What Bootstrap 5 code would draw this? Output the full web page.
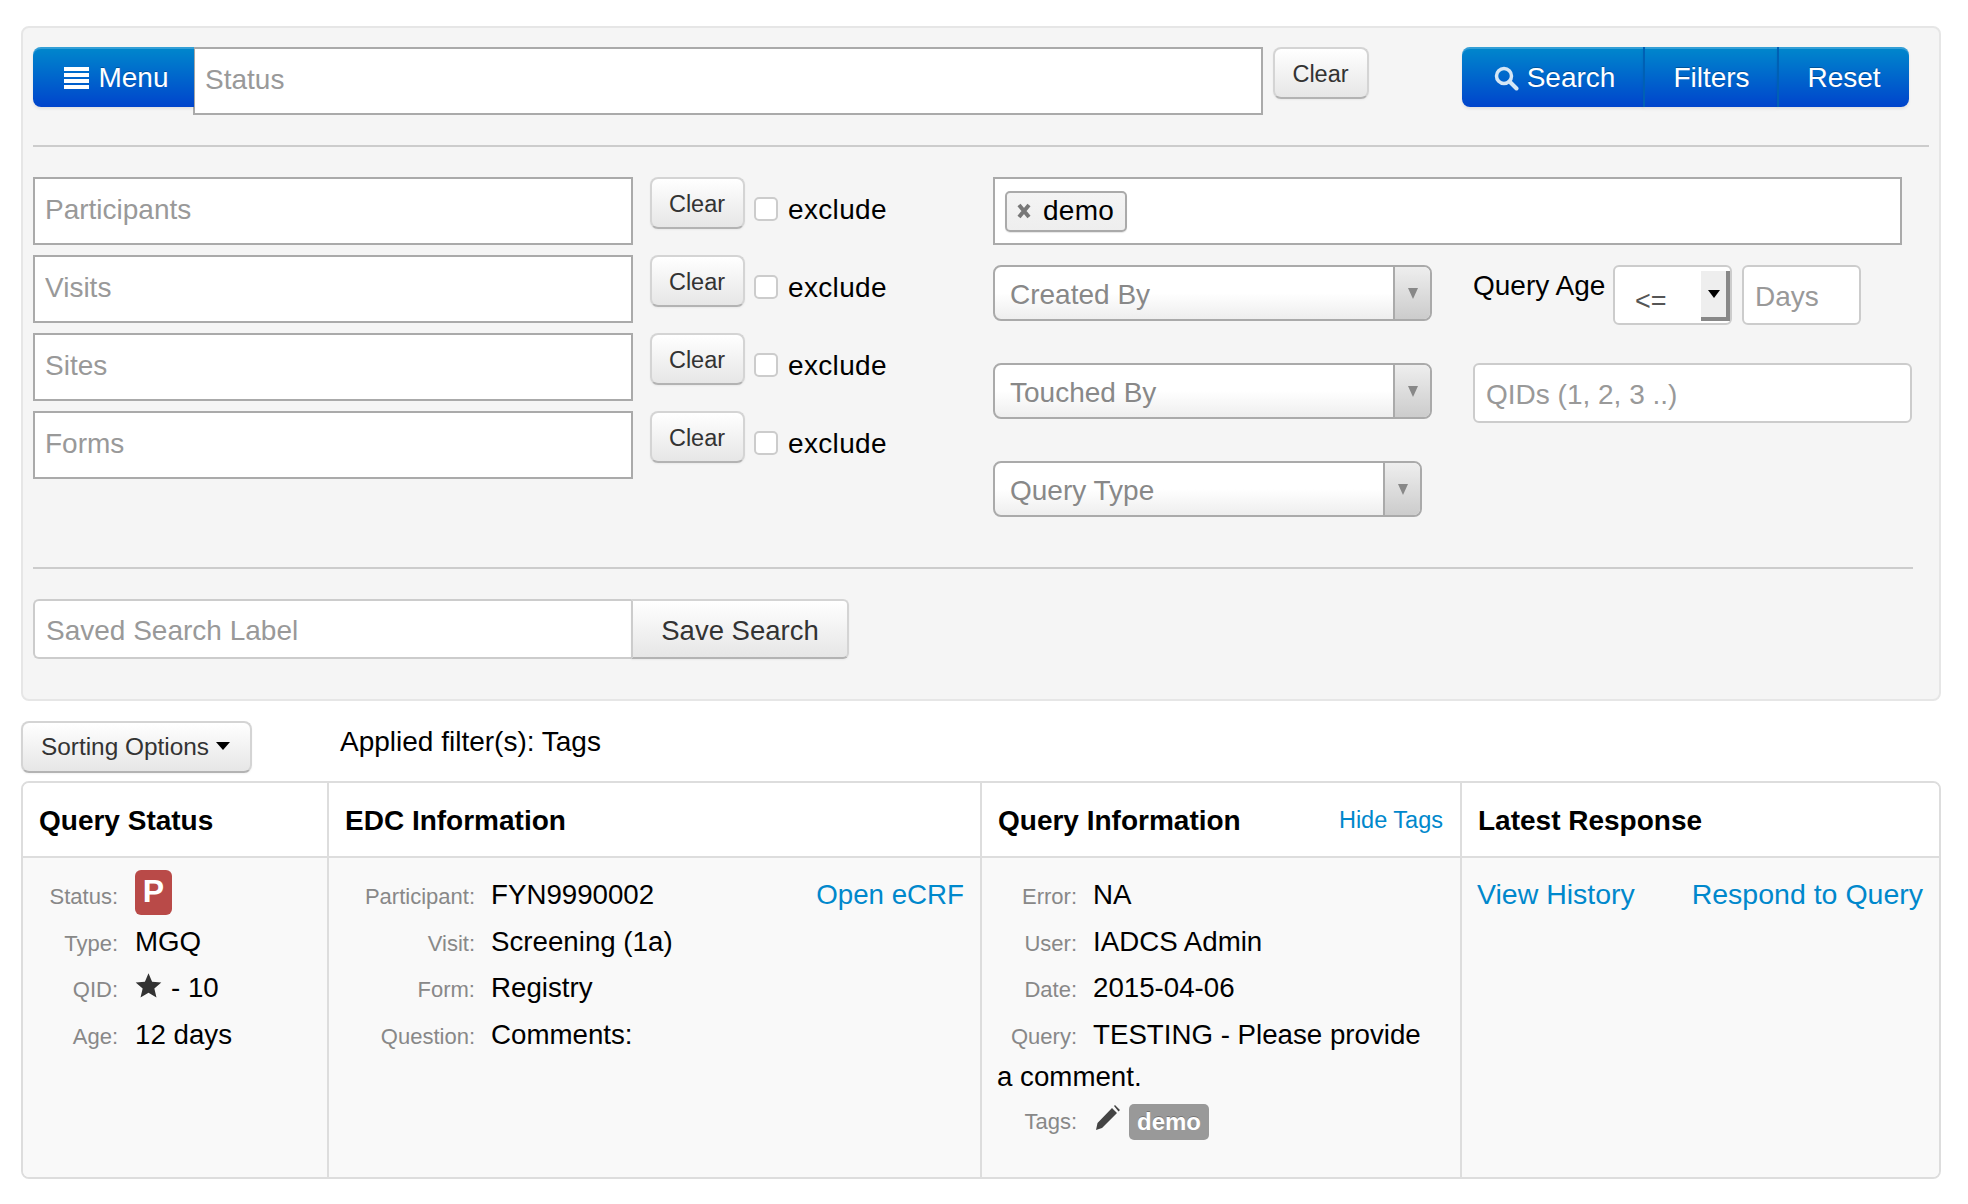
<!DOCTYPE html>
<html lang="en">
<head>
    <meta charset="UTF-8">
    <meta name="viewport" content="width=device-width, initial-scale=1.0">
    <title>Query Search</title>
    <link href="https://cdn.jsdelivr.net/npm/bootstrap@5.3.0/dist/css/bootstrap.min.css" rel="stylesheet">
    <style>
        body { font-family: "Liberation Sans", Arial, sans-serif; font-size: 28px; color: #000; background: #fff; }
        .page-wrap { padding: 26px 27px 24px 21px; }

        .search-well { background: #f5f5f5; border: 2px solid #e6e6e6; border-radius: 8px; padding: 19px 10px 39px 10px; height: 675px; }
        .rule-one, .rule-two { border: 0; border-top: 2px solid #ccc; opacity: 1; }
        .rule-one { margin: 30px 0 30px 0; width: 1896px; }
        .rule-two { margin: 50px 0 30px 0; width: 1880px; }

        .field-sharp.form-control { width: 600px; height: 68px; border: 2px solid #aaa; border-radius: 0; font-size: 28px; padding: 0 10px 2px; color: #000; background: #fff; box-shadow: none; }
        .field-sharp.form-control::placeholder,
        .field-soft.form-control::placeholder { color: #999; opacity: 1; }
        .status-field.form-control { flex: 0 0 1070px; width: 1070px; padding: 0 10px 2px; }
        .field-soft.form-control { height: 60px; border: 2px solid #ccc; border-radius: 6px; font-size: 28px; padding: 4px 11px 0; background: #fff; box-shadow: none; }

        .blue-btn.btn { background: linear-gradient(#0088cc, #0044cc); color: #fff; border: 0; border-radius: 8px; font-size: 28px; height: 60px; padding: 2px 0 0; box-shadow: inset 0 2px 0 rgba(255,255,255,.2), 0 2px 3px rgba(0,0,0,.08); display: flex; align-items: center; justify-content: center; text-shadow: 0 -1px 0 rgba(0,0,0,.25); }
        .menu-btn.btn { width: 161px; gap: 9px; padding-left: 6px; border-radius: 8px 0 0 8px; }
        .action-group { width: 449px; height: 60px; margin-left: auto; margin-right: 18px; }
        .action-group .blue-btn.btn { flex: 0 0 auto; }
        .action-group .search-btn { width: 182px; gap: 8px; padding-left: 3px; }
        .action-group .filters-btn { width: 135px; border-left: 2px solid #0060b4; }
        .action-group .reset-btn { width: 132px; border-left: 2px solid #0060b4; }

        .grey-btn.btn { background: linear-gradient(#fff, #e6e6e6); border: 2px solid #d4d4d4; border-bottom-color: #b3b3b3; border-radius: 8px; color: #333; padding: 0; box-shadow: inset 0 1px 0 rgba(255,255,255,.2), 0 1px 2px rgba(0,0,0,.05); }
        .clear-btn.btn { width: 95px; height: 52px; font-size: 23.5px; padding: 3px 1px 0 0; }
        .top-clear.btn { margin-left: 10px; width: 96px; padding-top: 3px; }

        .filter-left { width: 960px; flex: 0 0 960px; }
        .filter-line { height: 68px; margin-bottom: 10px; }
        .filter-line .clear-btn { margin-left: 17px; }
        .exclude-box.form-check-input { width: 24px; height: 24px; margin: 20px 0 0 9px; border: 2px solid #ccc; border-radius: 5px; background-color: #fff; }
        .exclude-text { margin-left: 10px; line-height: 66px; letter-spacing: .35px; }

        .tag-field { width: 909px; height: 68px; border: 2px solid #aaa; background: #fff; padding: 10px; margin-bottom: 20px; }
        .tag-chip { display: inline-flex; align-items: center; height: 41px; width: 122px; border: 2px solid #aaa; border-radius: 5px; background: linear-gradient(#f4f4f4, #eee); padding-left: 10px; gap: 12px; letter-spacing: .3px; box-shadow: 0 1px 1px rgba(0,0,0,.1); }
        .pick-line { height: 98px; }
        .pick-box { width: 439px; height: 56px; border: 2px solid #aaa; border-radius: 8px; background: linear-gradient(#fff 50%, #eee); color: #888; padding-left: 15px; line-height: 55px; overflow: hidden; flex: 0 0 auto; }
        .pick-box.pick-short { width: 429px; }
        .pick-text { flex: 1 1 auto; }
        .pick-arrow { width: 37px; height: 100%; border-left: 2px solid #aaa; background: linear-gradient(#eee, #ccc); }
        .pick-arrow i { border-style: solid; border-width: 11px 5px 0; border-color: #888 transparent transparent; }
        .age-label { width: 140px; margin-left: 41px; line-height: 42px; }
        .age-select { position: relative; width: 119px; height: 60px; border: 2px solid #ccc; border-radius: 6px; background: #fff; color: #555; font-size: 27px; padding: 14px 0 0 20px; }
        .age-arrow { position: absolute; top: 4px; right: 0; width: 29px; height: 50px; background: #eee; border-right: 4px solid #888; border-bottom: 4px solid #888; }
        .age-arrow i { border-style: solid; border-width: 8px 6px 0; border-color: #000 transparent transparent; }
        .days-field.form-control { width: 119px; margin-left: 10px; flex: 0 0 auto; }
        .qid-field.form-control { width: 439px; margin-left: 41px; flex: 0 0 auto; }

        .save-group { width: 816px; }
        .save-field.form-control { flex: 0 0 598px; width: 598px; height: 60px; border-right: 0; border-radius: 6px 0 0 6px; padding: 3px 11px 0; color: #000; }
        .save-btn.btn { width: 218px; height: 60px; font-size: 27.5px; padding-top: 3px; border-radius: 0 6px 6px 0 !important; border-left: 2px solid #ccc; margin-left: 0 !important; }

        .tools-line { margin-top: 20px; height: 60px; }
        .sort-btn.btn { width: 231px; height: 52px; font-size: 24.4px; padding-right: 2px; }
        .sort-btn.dropdown-toggle::after { vertical-align: 5px; margin-left: 7px; border-top: 8px solid #000; border-right: 7px solid transparent; border-left: 7px solid transparent; border-bottom: 0; }
        .applied-text { margin-left: 88px; line-height: 42px; }

        .result-frame { border: 2px solid #ddd; border-radius: 8px; overflow: hidden; height: 398px; }
        .result-table.table { table-layout: fixed; width: 1916px; height: 100%; margin: 0; border-collapse: collapse; }
        .result-table.table > thead > tr > th { height: 74px; padding: 2px 17px 0 16px; font-size: 28px; font-weight: 700; vertical-align: middle; border-bottom: 2px solid #ddd; border-left: 2px solid #ddd; background: #fff; color: #000; box-shadow: none; }
        .result-table.table > tbody > tr > td { padding: 15px 16px 0 15px; font-size: 27.7px; vertical-align: top; border: 0; border-left: 2px solid #ddd; background: #f9f9f9; color: #000; box-shadow: none; }
        .result-table.table > thead > tr > th:first-child,
        .result-table.table > tbody > tr > td:first-child { border-left: 0; padding-left: 16px; }
        .col-status { width: 305px; }
        .col-edc { width: 653px; }
        .col-query { width: 480px; }
        .col-latest { width: 478px; }
        .hide-link { font-size: 23.5px; font-weight: 400; line-height: 40px; }
        .result-table a { color: #0088cc; text-decoration: none; }
        .response-links a { font-size: 28.5px; white-space: nowrap; }

        .info-line { line-height: 43px; margin-bottom: 3.5px; }
        .info-wrapped { line-height: 42.5px; padding-top: 1px; }
        .info-key { display: inline-block; text-align: right; color: #888; font-size: 22px; line-height: 1; margin-right: 17px; }
        .key-short { width: 79px; }
        .key-mid { width: 80px; margin-right: 16px; }
        .key-long { width: 131px; margin-right: 16px; }
        .status-line { height: 43px; }
        .status-mark { display: inline-block; width: 37px; height: 45px; line-height: 43px; text-align: center; background: #b94a48; color: #fff; font-size: 32px; font-weight: 700; border-radius: 6px; vertical-align: top; margin-top: -3px; }
        .star-mark { vertical-align: -2px; margin: -6px 9px 0 0; }
        .pencil-mark { vertical-align: -2px; margin: -6px 9px 0 1px; }
        .demo-tag.badge { background: #999; color: #fff; font-size: 24px; font-weight: 700; width: 80px; height: 36px; line-height: 36px; padding: 0; border-radius: 5px; vertical-align: -1px; margin-top: -4px; text-shadow: 0 -1px 0 rgba(0,0,0,.25); }
        .tags-line { height: 43px; margin-top: -4px; }
    </style>
</head>
<body>
    <div class="page-wrap">
        <div class="search-well">
            <div class="d-flex align-items-start">
                <div class="input-group flex-nowrap w-auto">
                    <button type="button" class="btn blue-btn menu-btn">
                        <svg width="25" height="22" viewBox="0 0 25 22"><path fill="#fff" d="M0 0h25v4H0zM0 6h25v4H0zM0 12h25v4H0zM0 18h25v4H0z"/></svg>
                        Menu
                    </button>
                    <input type="text" class="form-control field-sharp status-field" placeholder="Status">
                </div>
                <button type="button" class="btn grey-btn clear-btn top-clear">Clear</button>
                <div class="btn-group action-group">
                    <button type="button" class="btn blue-btn search-btn">
                        <svg width="25" height="25" viewBox="0 0 25 25"><circle cx="10" cy="10" r="7.5" fill="none" stroke="#d5e6f5" stroke-width="3.5"/><path d="M15.5 15.5l7 7" stroke="#d5e6f5" stroke-width="4" stroke-linecap="round"/></svg>
                        Search
                    </button>
                    <button type="button" class="btn blue-btn filters-btn">Filters</button>
                    <button type="button" class="btn blue-btn reset-btn">Reset</button>
                </div>
            </div>

            <hr class="rule-one">

            <div class="d-flex">
                <div class="filter-left">
                    <div class="d-flex filter-line">
                        <input type="text" class="form-control field-sharp" placeholder="Participants">
                        <button type="button" class="btn grey-btn clear-btn">Clear</button>
                        <input type="checkbox" class="form-check-input exclude-box">
                        <span class="exclude-text">exclude</span>
                    </div>
                    <div class="d-flex filter-line">
                        <input type="text" class="form-control field-sharp" placeholder="Visits">
                        <button type="button" class="btn grey-btn clear-btn">Clear</button>
                        <input type="checkbox" class="form-check-input exclude-box">
                        <span class="exclude-text">exclude</span>
                    </div>
                    <div class="d-flex filter-line">
                        <input type="text" class="form-control field-sharp" placeholder="Sites">
                        <button type="button" class="btn grey-btn clear-btn">Clear</button>
                        <input type="checkbox" class="form-check-input exclude-box">
                        <span class="exclude-text">exclude</span>
                    </div>
                    <div class="d-flex filter-line">
                        <input type="text" class="form-control field-sharp" placeholder="Forms">
                        <button type="button" class="btn grey-btn clear-btn">Clear</button>
                        <input type="checkbox" class="form-check-input exclude-box">
                        <span class="exclude-text">exclude</span>
                    </div>
                </div>
                <div>
                    <div class="tag-field">
                        <span class="tag-chip">
                            <svg width="14" height="16" viewBox="0 0 14 16"><path d="M2 2l10 12M12 2L2 14" stroke="#777" stroke-width="4"/></svg>
                            demo
                        </span>
                    </div>
                    <div class="d-flex align-items-start pick-line">
                        <div class="pick-box d-flex">
                            <span class="pick-text">Created By</span>
                            <span class="pick-arrow d-flex align-items-center justify-content-center"><i></i></span>
                        </div>
                        <span class="age-label">Query Age</span>
                        <div class="age-select">&lt;=<span class="age-arrow d-flex align-items-center justify-content-center"><i></i></span></div>
                        <input type="text" class="form-control field-soft days-field" placeholder="Days">
                    </div>
                    <div class="d-flex align-items-start pick-line">
                        <div class="pick-box d-flex">
                            <span class="pick-text">Touched By</span>
                            <span class="pick-arrow d-flex align-items-center justify-content-center"><i></i></span>
                        </div>
                        <input type="text" class="form-control field-soft qid-field" placeholder="QIDs (1, 2, 3 ..)">
                    </div>
                    <div class="d-flex pick-box pick-short">
                        <span class="pick-text">Query Type</span>
                        <span class="pick-arrow d-flex align-items-center justify-content-center"><i></i></span>
                    </div>
                </div>
            </div>

            <hr class="rule-two">

            <div class="input-group flex-nowrap save-group">
                <input type="text" class="form-control field-soft save-field" placeholder="Saved Search Label">
                <button type="button" class="btn grey-btn save-btn">Save Search</button>
            </div>
        </div>

        <div class="d-flex align-items-start tools-line">
            <button type="button" class="btn grey-btn sort-btn dropdown-toggle">Sorting Options</button>
            <span class="applied-text">Applied filter(s): Tags</span>
        </div>

        <div class="result-frame">
            <table class="table result-table">
                <colgroup>
                    <col class="col-status">
                    <col class="col-edc">
                    <col class="col-query">
                    <col class="col-latest">
                </colgroup>
                <thead>
                    <tr>
                        <th>Query Status</th>
                        <th>EDC Information</th>
                        <th><a href="#" class="hide-link float-end">Hide Tags</a>Query Information</th>
                        <th>Latest Response</th>
                    </tr>
                </thead>
                <tbody>
                    <tr>
                        <td>
                            <div class="info-line status-line"><span class="info-key key-short">Status:</span><span class="status-mark">P</span></div>
                            <div class="info-line"><span class="info-key key-short">Type:</span>MGQ</div>
                            <div class="info-line"><span class="info-key key-short">QID:</span><svg width="27" height="27" viewBox="0 0 24 24" class="star-mark"><path fill="#333" d="M12 1l3.200 7.600 8.200.7-6.200 5.400 1.900 8L12 18.400l-7.100 4.300 1.900-8L.6 9.300l8.200-.7z"/></svg>- 10</div>
                            <div class="info-line"><span class="info-key key-short">Age:</span>12 days</div>
                        </td>
                        <td>
                            <div class="info-line"><a href="#" class="float-end">Open eCRF</a><span class="info-key key-long">Participant:</span>FYN9990002</div>
                            <div class="info-line"><span class="info-key key-long">Visit:</span>Screening (1a)</div>
                            <div class="info-line"><span class="info-key key-long">Form:</span>Registry</div>
                            <div class="info-line"><span class="info-key key-long">Question:</span>Comments:</div>
                        </td>
                        <td>
                            <div class="info-line"><span class="info-key key-mid">Error:</span>NA</div>
                            <div class="info-line"><span class="info-key key-mid">User:</span>IADCS Admin</div>
                            <div class="info-line"><span class="info-key key-mid">Date:</span>2015-04-06</div>
                            <div class="info-line info-wrapped"><span class="info-key key-mid">Query:</span>TESTING - Please provide<br>a comment.</div>
                            <div class="info-line tags-line"><span class="info-key key-mid">Tags:</span><svg width="26" height="26" viewBox="0 0 26 26" class="pencil-mark"><path fill="#444" d="M18 3l5 5L8 23l-6 2 1.500-7zM20 1l1-1 5 5-1.500 1.500z"/></svg><span class="badge demo-tag">demo</span></div>
                        </td>
                        <td>
                            <div class="d-flex justify-content-between info-line response-links"><a href="#">View History</a><a href="#">Respond to Query</a></div>
                        </td>
                    </tr>
                </tbody>
            </table>
        </div>
    </div>

    <script src="https://cdn.jsdelivr.net/npm/bootstrap@5.3.0/dist/js/bootstrap.bundle.min.js"></script>
</body>
</html>
